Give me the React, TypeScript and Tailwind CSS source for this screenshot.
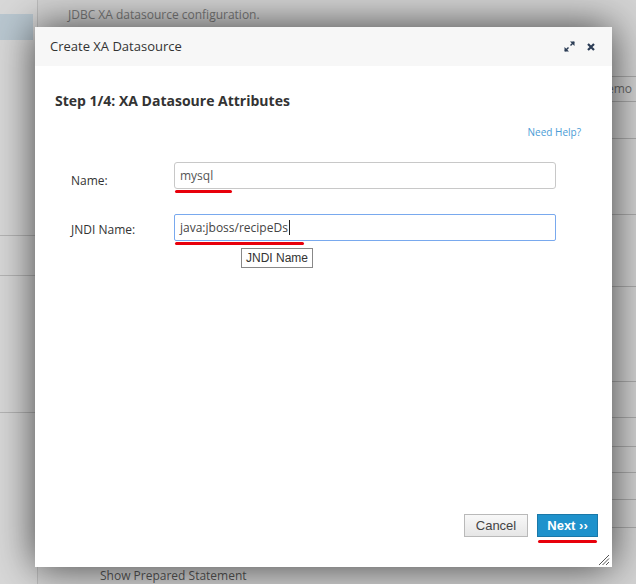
import React from "react";

const sans = { fontFamily: '"Open Sans", "Liberation Sans", sans-serif' };
const arial = { fontFamily: '"Liberation Sans", Arial, sans-serif' };

export default function App() {
  return (
    <div className="relative w-[636px] h-[584px] overflow-hidden bg-[#d3d3d3]" style={sans}>
      {/* background page */}
      <div className="absolute inset-0 flex">
        <div className="w-[38px] h-full border-r border-[#bdbdbd] bg-[#d8d8d8] flex flex-col">
          <div className="h-[14px]" />
          <div className="h-[26px] w-[33px] bg-[#b9c7d0]" />
          <div className="h-[195px]" />
          <div className="h-[40px] border-t border-[#b5b5b5]" />
          <div className="h-[137px] border-t border-[#b5b5b5]" />
          <div className="flex-1 border-t border-[#b5b5b5]" />
        </div>
        <div className="flex-1 flex flex-col">
          <div className="h-[27px] pl-[30px] pt-[6px] text-[12px] text-[#7a7a7a]">JDBC XA datasource configuration.</div>
          <div className="flex-1 flex justify-end">
            <div className="w-[30px] flex flex-col">
              <div className="h-[49px]" />
              <div className="h-[26px] border-y border-[#a9a9a9] text-[12px] text-[#6a6a6a] pl-[1px] leading-[24px]">emo</div>
              <div className="h-[37px] border-b border-[#ababab]" />
              <div className="h-[76px] border-b border-[#ababab]" />
              <div className="h-[72px] border-b border-[#ababab]" />
              <div className="h-[95px] border-b border-[#ababab]" />
              <div className="h-[36px] border-b border-[#ababab]" />
              <div className="h-[29px] border-b border-[#ababab]" />
              <div className="h-[26px] border-b border-[#ababab]" />
              <div className="h-[27px] border-b border-[#ababab]" />
              <div className="h-[28px] border-b border-[#ababab]" />
            </div>
          </div>
          <div className="h-[17px] pl-[62px] pt-[2px] text-[12px] text-[#555] leading-[14px]">Show Prepared Statement</div>
        </div>
      </div>

      {/* modal */}
      <div className="absolute left-[35px] top-[27px] w-[577px] h-[540px] bg-white flex flex-col shadow-[0_0_38px_rgba(0,0,0,0.7)]">
        <div className="h-[39px] bg-[#f7f7f7] flex items-center px-[15px]">
          <div className="flex-1 text-[13px] text-[#333]">Create XA Datasource</div>
          <svg width="11" height="11" viewBox="0 0 11 11" className="mr-[12px]">
            <path d="M1 10 L4.5 6.5" stroke="#2b3c55" strokeWidth="1.5" />
            <path d="M0.5 6 L0.5 10.5 L5 10.5 Z" fill="#2b3c55" />
            <path d="M10 1 L6.5 4.5" stroke="#2b3c55" strokeWidth="1.5" />
            <path d="M10.5 5 L10.5 0.5 L6 0.5 Z" fill="#2b3c55" />
          </svg>
          <svg width="8" height="8" viewBox="0 0 8 8" className="mr-[2px]">
            <path d="M1 1 L7 7 M7 1 L1 7" stroke="#2b3c55" strokeWidth="2.2" />
          </svg>
        </div>
        <div className="flex-1 flex flex-col pl-[20px] pr-[31px] pt-[25px] relative">
          <div className="text-[14px] font-bold text-[#333] leading-[19px]">Step 1/4: XA Datasoure Attributes</div>
          <div className="mt-[15px] flex justify-end text-[10px] text-[#4a9cd6] leading-[14px]">Need Help?</div>
          <div className="mt-[23px] pl-[16px] flex items-center">
            <div className="w-[103px] text-[12px] text-[#333] pt-[7px]">Name:</div>
            <div className="flex flex-col">
              <div className="w-[382px] h-[27px] border border-[#c8c8c8] rounded-[3px] flex items-center px-[5px] text-[12px] text-[#555]">mysql</div>
              <div className="mt-[1px] ml-[1px] w-[57px] h-[3px] rounded-full bg-[#e8000b]" />
            </div>
          </div>
          <div className="mt-[21px] pl-[16px] flex items-start">
            <div className="w-[103px] text-[12px] text-[#333] pt-[7px]">JNDI Name:</div>
            <div className="flex flex-col">
              <div className="w-[382px] h-[27px] border border-[#79a9ee] rounded-[2px] flex items-center px-[5px] text-[12px] text-[#444]">
                java:jboss/recipeDs<span className="inline-block w-px h-[15px] bg-[#222] ml-[1px]" />
              </div>
              <div className="mt-[1px] ml-[1px] w-[129px] h-[3px] rounded-full bg-[#e8000b]" />
              <div className="mt-[3px] ml-[67px] w-fit border border-[#888] bg-white px-[4px] h-[20px] leading-[18px] text-[12px] text-[#333]" style={arial}>JNDI Name</div>
            </div>
          </div>
          <div className="flex-1" />
          <div className="flex justify-end gap-[9px] mr-[-17px]" style={arial}>
            <div className="w-[64px] h-[23px] border border-[#b9b9b9] bg-gradient-to-b from-[#f8f8f8] to-[#e6e6e6] text-[13px] text-[#444] flex items-center justify-center">Cancel</div>
            <div className="flex flex-col">
              <div className="w-[61px] h-[23px] border border-[#1a78a8] bg-[#1e92cc] text-[13px] font-bold text-white flex items-center justify-center">Next ››</div>
              <div className="mt-[3px] ml-[1px] w-[59px] h-[3px] rounded-full bg-[#e8000b]" />
            </div>
          </div>
          <div className="h-[24px]" />
          <svg width="12" height="12" viewBox="0 0 12 12" className="absolute right-[2px] bottom-[1px]">
            <path d="M11 1 L1 11 M11 4.5 L4.5 11 M11 8 L8 11" stroke="#555" strokeWidth="1" />
          </svg>
        </div>
      </div>
    </div>
  );
}
